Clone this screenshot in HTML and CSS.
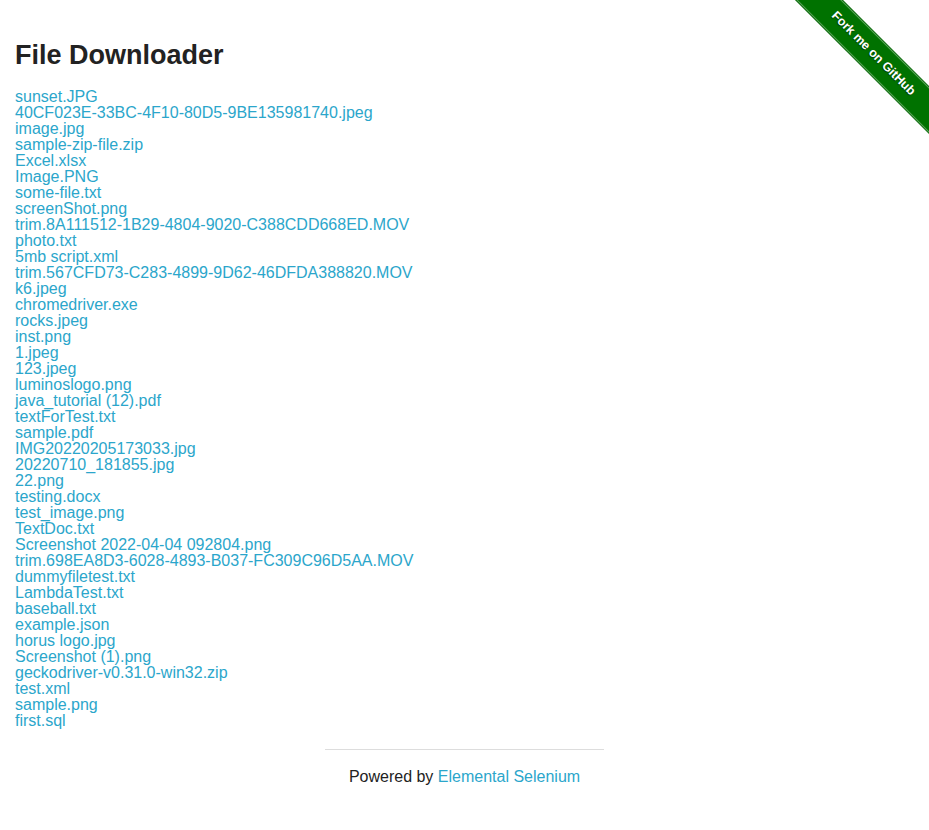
FILE: index.html
```html
<!DOCTYPE html>
<html>
<head>
<meta charset="utf-8">
<link rel="stylesheet" href="styles.css">
</head>
<body>
<div class="ribbon-wrap"><a class="ribbon" href="#">Fork me on GitHub</a></div>
<div class="content">
  <h3 class="title">File Downloader</h3>
  <div class="files">
    <a href="#">sunset.JPG</a>
    <a href="#">40CF023E-33BC-4F10-80D5-9BE135981740.jpeg</a>
    <a href="#">image.jpg</a>
    <a href="#">sample-zip-file.zip</a>
    <a href="#">Excel.xlsx</a>
    <a href="#">Image.PNG</a>
    <a href="#">some-file.txt</a>
    <a href="#">screenShot.png</a>
    <a href="#">trim.8A111512-1B29-4804-9020-C388CDD668ED.MOV</a>
    <a href="#">photo.txt</a>
    <a href="#">5mb script.xml</a>
    <a href="#">trim.567CFD73-C283-4899-9D62-46DFDA388820.MOV</a>
    <a href="#">k6.jpeg</a>
    <a href="#">chromedriver.exe</a>
    <a href="#">rocks.jpeg</a>
    <a href="#">inst.png</a>
    <a href="#">1.jpeg</a>
    <a href="#">123.jpeg</a>
    <a href="#">luminoslogo.png</a>
    <a href="#">java_tutorial (12).pdf</a>
    <a href="#">textForTest.txt</a>
    <a href="#">sample.pdf</a>
    <a href="#">IMG20220205173033.jpg</a>
    <a href="#">20220710_181855.jpg</a>
    <a href="#">22.png</a>
    <a href="#">testing.docx</a>
    <a href="#">test_image.png</a>
    <a href="#">TextDoc.txt</a>
    <a href="#">Screenshot 2022-04-04 092804.png</a>
    <a href="#">trim.698EA8D3-6028-4893-B037-FC309C96D5AA.MOV</a>
    <a href="#">dummyfiletest.txt</a>
    <a href="#">LambdaTest.txt</a>
    <a href="#">baseball.txt</a>
    <a href="#">example.json</a>
    <a href="#">horus logo.jpg</a>
    <a href="#">Screenshot (1).png</a>
    <a href="#">geckodriver-v0.31.0-win32.zip</a>
    <a href="#">test.xml</a>
    <a href="#">sample.png</a>
    <a href="#">first.sql</a>
  </div>
</div>
<div class="footer">
  <div class="footer-inner">
    <hr class="rule">
    <div class="powered">Powered by <a href="#">Elemental Selenium</a></div>
  </div>
</div>
</body>
</html>
```
FILE: styles.css
```css
html, body {
  margin: 0;
  padding: 0;
  background: #fff;
}
body {
  font-family: "Liberation Sans", Arial, Helvetica, sans-serif;
  font-size: 16px;
  line-height: 16px;
  color: #222;
  position: relative;
}
a {
  color: #2ba6cb;
  text-decoration: none;
}
.content {
  padding: 0 15px;
}
.title {
  margin: 39px 0 17px;
  font-size: 27px;
  line-height: 33px;
  font-weight: bold;
  color: #222;
}
.files {
  display: flex;
  flex-direction: column;
  align-items: flex-start;
}
.files a {
  display: block;
  line-height: 16px;
  height: 16px;
  white-space: nowrap;
}
.footer {
  display: flex;
  justify-content: center;
}
.footer-inner {
  width: 279px;
}
.rule {
  margin: 20px 0 19px;
  border: 0;
  border-top: 1px solid #ddd;
  height: 0;
}
.powered {
  text-align: center;
  line-height: 16px;
}
.ribbon-wrap {
  position: absolute;
  top: 0;
  right: 0;
  width: 149px;
  height: 149px;
  overflow: hidden;
}
.ribbon {
  position: absolute;
  left: -17px;
  top: 38px;
  width: 220px;
  height: 32px;
  box-sizing: border-box;
  transform: rotate(45deg);
  background: #007200;
  color: #fff;
  font-family: "Liberation Sans", Arial, sans-serif;
  font-weight: bold;
  font-size: 12.5px;
  line-height: 28px;
  text-align: center;
  border-top: 1px solid rgba(255,255,255,0.35);
  border-bottom: 1px solid rgba(255,255,255,0.35);
  box-shadow: 0 0 0 1px #0b6a0b;
  text-shadow: 0 1px 1px rgba(0,0,0,0.5);
}
```
